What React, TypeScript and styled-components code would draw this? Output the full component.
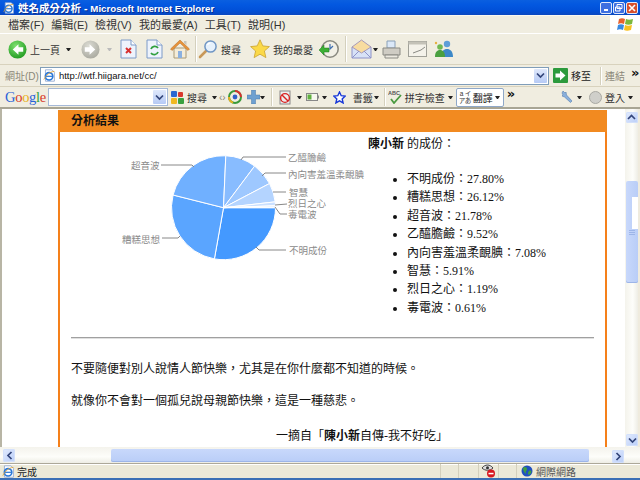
import React from "react";
import styled, { createGlobalStyle } from "styled-components";

const Global = createGlobalStyle`
  html, body { margin: 0; padding: 0; background: #ece9d8; overflow: hidden; }
  #root { width: 640px; height: 480px; }
  * { box-sizing: border-box; }
`;
const UI = `"Liberation Sans", "Noto Sans CJK TC", sans-serif`;
const SERIF = `"Liberation Serif", "Noto Sans CJK TC", serif`;

const Win = styled.div`
  width: 640px; height: 480px; display: flex; flex-direction: column; overflow: hidden;
  font-family: ${UI}; font-size: 11px; color: #222; background: #efebde;
`;
const TitleBar = styled.div`
  height: 15px; flex: none; display: flex; align-items: center; padding: 0 2px 0 3px;
  background: linear-gradient(180deg, #0a5fe0 0%, #0358e0 30%, #0150d8 70%, #0a48c0 100%);
`;
const TitleText = styled.span`
  margin-left: 3px; color: #fff; font-weight: 700; font-size: 10.5px; flex: 1; white-space: nowrap;
  text-shadow: 1px 1px 0 #0a2f90;
`;
const TitleLatin = styled.span`font-size: 9.7px;`;
const WinBtn = styled.div<{ $c?: string }>`
  width: 12px; height: 12px; margin-left: 1px; border: 1px solid #dfe8fb; border-radius: 2px;
  background: ${(p) => p.$c || "#3d6fe0"}; display: flex; align-items: center; justify-content: center;
`;
const MenuBar = styled.div`
  height: 19px; flex: none; display: flex; align-items: center; padding-left: 8px; gap: 7.2px;
  background: #f0ede0; border-bottom: 1px solid #fff; box-shadow: inset 0 1px 0 #faf8f0;
`;
const MenuItem = styled.span`font-size: 11px; color: #333; white-space: nowrap;`;
const FlagBox = styled.div`
  margin-left: auto; width: 30px; height: 18px; background: #fff; display: flex; align-items: center; justify-content: center;
`;
const Toolbar = styled.div`
  height: 31px; flex: none; display: flex; align-items: center; padding-left: 8px; background: #f0ede0;
  border-bottom: 1px solid #d8d2bd;
`;
const Tool = styled.div<{ $ml?: number }>`
  display: flex; align-items: center; gap: 3px; margin-left: ${(p) => p.$ml || 0}px; white-space: nowrap; font-size: 10px; color: #333; flex: none;
`;
const Caret = styled.span<{ $ml?: number; $c?: string }>`
  width: 5px; height: 3px; flex: none; margin-left: ${(p) => p.$ml || 0}px;
  border-left: 2.5px solid transparent; border-right: 2.5px solid transparent; border-top: 3px solid ${(p) => p.$c || "#222"};
`;
const Sep = styled.div<{ $ml?: number; $h?: number }>`
  width: 1px; height: ${(p) => p.$h || 26}px; background: #d4d0bd; box-shadow: 1px 0 0 #fff; flex: none; margin-left: ${(p) => p.$ml || 0}px;
`;
const AddressBar = styled.div`
  height: 22px; flex: none; display: flex; align-items: center; padding-left: 5px; background: #f0ede0; border-bottom: 1px solid #d8d2bd;
`;
const Dim = styled.span<{ $ml?: number }>`color: #8a8778; font-size: 10px; margin-left: ${(p) => p.$ml || 0}px; white-space: nowrap; flex: none;`;
const AddrInput = styled.div`
  margin-left: 1px; width: 509px; height: 18px; border: 1px solid #7f9db9; background: #fff; display: flex; align-items: center; padding-left: 2px; flex: none;
  font-size: 9.5px; color: #111; gap: 3px;
`;
const Combo = styled.div`
  margin-left: auto; width: 13px; height: 14px; margin-right: 1px; border-radius: 1px; background: linear-gradient(#dfe8fb, #b6caf5); display: flex; align-items: center; justify-content: center; flex: none;
`;
const GoText = styled.span`font-size: 10px; color: #222; margin-left: 3px;`;
const GoBtn = styled.div`display: flex; align-items: center; margin-left: 4px; flex: none;`;
const GBar = styled.div`
  height: 22px; flex: none; display: flex; align-items: center; padding-left: 5px; background: #f0ede0; border-bottom: 2px solid #a8a594;
`;
const Logo = styled.span`font-family: "Liberation Serif", serif; font-size: 14.5px; letter-spacing: -0.3px; width: 41px; flex: none;`;
const L = styled.span<{ $c: string }>`color: ${(p) => p.$c};`;
const GInput = styled.div`
  margin-left: 2px; width: 120px; height: 18px; border: 1px solid #a5b9d8; background: #fff; display: flex; align-items: center; flex: none;
`;
const TransBox = styled.div`
  margin-left: 3px; width: 48px; height: 19px; border: 1px solid #8fa8c8; border-radius: 2px; background: #fff; display: flex; align-items: center; flex: none; padding-left: 2px; gap: 2px; font-size: 10px; white-space: nowrap;
`;
const TransGlyphs = styled.div`
  display: grid; grid-template-columns: 6px 6px; grid-auto-rows: 7px; font-size: 6.5px; line-height: 7px; color: #333; text-align: center; flex: none;
`;
const Chevron = styled.span<{ $ml?: number }>`font-family: "DejaVu Sans", sans-serif; font-weight: 700; font-size: 13px; margin-left: ${(p) => p.$ml || 0}px; line-height: 10px; margin-top: -6px; flex: none; color: #111;`;

const Viewport = styled.div`
  flex: 1; min-height: 0; display: flex; background: #fff; border-left: 2px solid #b8b5a5; border-right: 2px solid #efebde;
`;
const Page = styled.div`flex: 1; min-width: 0; overflow: hidden; padding-left: 56px; font-family: ${SERIF}; color: #111; font-size: 12px;`;
const Card = styled.div`width: 549px; border-left: 2px solid #f5801a; border-right: 2px solid #f5801a; background: #fff; height: 400px;`;
const CardHead = styled.div`
  height: 22px; margin: 1px -2px 0; background: #f28a20; color: #111; font-weight: 700; font-size: 12px; display: flex; align-items: center; padding: 0 0 3px 13px; font-family: "Noto Sans CJK TC", sans-serif;
`;
const Result = styled.div`display: flex; height: 205px;`;
const ChartSvg = styled.svg`width: 308px; height: 205px; flex: none; font-family: "Noto Sans CJK TC", sans-serif; display: block;`;
const Info = styled.div`flex: 1; padding-top: 3px;`;
const Heading = styled.div`line-height: 18px; white-space: nowrap;`;
const Strong = styled.b`font-weight: 700;`;
const List = styled.ul`margin: 17px 0 0; padding: 0 0 0 39px; list-style: disc;`;
const Item = styled.li`line-height: 18.4px; white-space: nowrap;`;
const Rule = styled.hr`margin: 0 11px 0 11px; border: 0; height: 1px; background: #a0a0a0; box-shadow: 0 1px 0 #e0e0e0;`;
const Para = styled.p<{ $mt: number }>`margin: ${(p) => p.$mt}px 0 0 11px; line-height: 18px; white-space: nowrap;`;
const Cite = styled.p`margin: 17px 0 0 216px; line-height: 18px; white-space: nowrap;`;

const VBar = styled.div`
  width: 13px; flex: none; margin-left: 2px; display: flex; flex-direction: column; align-items: center; background: linear-gradient(90deg, #f4f3ec, #fdfdfa 60%, #eeede5); padding: 3px 0 1px;
`;
const ScrollBtn = styled.div<{ $w?: number; $h?: number; $end?: boolean }>`
  width: ${(p) => p.$w || 12}px; height: ${(p) => p.$h || 12}px; flex: none; border-radius: 2px; background: linear-gradient(135deg, #e2ebfe, #b9cdf8);
  display: flex; align-items: center; justify-content: center; box-shadow: inset 0 0 0 1px #d3e0fb;
  ${(p) => (p.$end ? "margin: auto 0 0 auto;" : "")}
`;
const VThumb = styled.div`
  width: 12px; height: 102px; margin-top: 58px; flex: none; border-radius: 2px; background: linear-gradient(90deg, #c8d8fb, #b9cdf7); position: relative; display: flex; flex-direction: column; align-items: center; justify-content: center; gap: 1px; box-shadow: inset 0 -1px 0 #9db5e8;
`;
const Highlight = styled.div`position: absolute; right: 0; top: 16px; width: 6px; height: 32px; background: #fff;`;
const Grip = styled.div`width: 6px; height: 1px; background: #9db5e8;`;
const HRow = styled.div`
  height: 16px; flex: none; display: flex; align-items: center; padding: 0 16px 0 3px; background: linear-gradient(180deg, #f4f3ec, #fdfdfa 60%, #eeede5);
`;
const HThumb = styled.div`
  margin-left: 96px; width: 478px; height: 13px; flex: none; border-radius: 2px; background: linear-gradient(#c8d8fb, #b9cdf7); box-shadow: inset 0 -1px 0 #9db5e8;
`;
const StatusBar = styled.div`
  height: 17px; flex: none; display: flex; align-items: center; padding-left: 2px; background: #ece9d8; border-top: 1px solid #aca899; box-shadow: inset 0 1px 0 #fff; border-bottom: 2px solid #3b6fb5; font-size: 10px; color: #222;
`;
const StatusCell = styled.div<{ $w?: number }>`
  width: ${(p) => p.$w}px; height: 14px; flex: none; border-left: 1px solid #d4d0bd; display: flex; align-items: center; justify-content: center;
`;
const StatusMain = styled.div`flex: 1; display: flex; align-items: center; gap: 2px;`;
const ZoneCell = styled(StatusCell)`justify-content: flex-start; padding-left: 4px; gap: 3px; color: #555;`;

const IE = ({ s = 14 }: { s?: number }) => (
  <svg width={s} height={s} viewBox="0 0 16 16">
    <path d="M3 1h8l3 3v11H3z" fill="#fff" stroke="#8aa4cf" />
    <circle cx="7.5" cy="9" r="4.6" fill="none" stroke="#2a78d8" strokeWidth="2" />
    <path d="M3 9h9" stroke="#2a78d8" strokeWidth="1.5" />
    <path d="M1 13C4 7 9 3 14 3" fill="none" stroke="#e0a030" strokeWidth="1" />
  </svg>
);
const Round = ({ c1, c2, s, dir }: { c1: string; c2: string; s: number; dir: "l" | "r" }) => (
  <svg width={s} height={s} viewBox="0 0 20 20">
    <defs>
      <radialGradient id={`g${c1.slice(1)}`} cx="40%" cy="30%" r="75%">
        <stop offset="0" stopColor={c1} />
        <stop offset="1" stopColor={c2} />
      </radialGradient>
    </defs>
    <circle cx="10" cy="10" r="9.5" fill={`url(#g${c1.slice(1)})`} />
    <path d={dir === "l" ? "M11 4.5 5 10l6 5.5V12.4h5V7.6h-5z" : "M9 4.5 15 10l-6 5.5V12.4H4V7.6h5z"} fill="#fff" />
  </svg>
);
const Doc = ({ children }: { children: React.ReactNode }) => (
  <svg width="17" height="20" viewBox="0 0 17 20">
    <path d="M1 1h10l5 5v13H1z" fill="#eef3fc" stroke="#7d9ac8" />
    <path d="M11 1v5h5" fill="#fff" stroke="#7d9ac8" />
    {children}
  </svg>
);
const Home = () => (
  <svg width="20" height="20" viewBox="0 0 20 20">
    <path d="M4 9h12v10H4z" fill="#f4ecd8" stroke="#a89a78" />
    <path d="M8 12h4v7H8z" fill="#8ab0e0" />
    <path d="M10 1 0.5 10l1.5 1.5L10 4l8 7.5 1.5-1.5z" fill="#e8923a" stroke="#b06a20" strokeWidth=".5" />
    <path d="M14 2h2.5v4L14 4z" fill="#c8c4b8" />
  </svg>
);
const Search = () => (
  <svg width="20" height="20" viewBox="0 0 20 20">
    <path d="M8 12 2 18" stroke="#c89858" strokeWidth="2.6" strokeLinecap="round" />
    <circle cx="12.5" cy="7.5" r="5.6" fill="#e6f1fc" stroke="#7096c4" strokeWidth="1.5" />
    <path d="M9.5 6a3.5 3.5 0 0 1 3-2.2" stroke="#fff" strokeWidth="1.3" fill="none" />
  </svg>
);
const Star = () => (
  <svg width="20" height="20" viewBox="0 0 20 20">
    <path d="M10 .8l2.8 6.1 6.6.7-5 4.4 1.5 6.600L10 15.200l-5.900 3.400 1.500-6.600-5-4.400 6.600-.7z" fill="#fbd948" stroke="#c9a230" strokeWidth=".8" />
  </svg>
);
const History = () => (
  <svg width="20" height="20" viewBox="0 0 20 20">
    <circle cx="11" cy="10" r="8.2" fill="#f2f0e6" stroke="#8a8a80" strokeWidth="1.6" />
    <path d="M11 5v5l3-3" stroke="#4070b0" strokeWidth="1.2" fill="none" />
    <path d="M0 11l5-5v3h5v4H5v3z" fill="#3cb034" stroke="#1f7a1f" strokeWidth=".5" />
  </svg>
);
const Mail = () => (
  <svg width="21" height="20" viewBox="0 0 21 20">
    <path d="M1 8h19v11H1z" fill="#d8e2f6" stroke="#8d92c8" />
    <path d="M1 8l9.5-7L20 8l-9.500 6z" fill="#f8dca0" stroke="#a89ab8" />
    <path d="M1 19l7-7m12 7-7-7" stroke="#8d92c8" />
  </svg>
);
const Printer = () => (
  <svg width="19" height="19" viewBox="0 0 19 19">
    <path d="M5 1h8v7H5z" fill="#dbe8f8" stroke="#8aa0b8" />
    <path d="M1 8h17v7H1z" fill="#cfccc4" stroke="#8a8a84" />
    <path d="M3 15h13v3H3z" fill="#ece9e0" stroke="#8a8a84" />
  </svg>
);
const Edit = () => (
  <svg width="19" height="16" viewBox="0 0 19 16">
    <rect x=".5" y=".5" width="18" height="15" fill="#f4f2ea" stroke="#a0a098" />
    <path d="M.5.5h18v3H.5z" fill="#c4c2b8" />
    <path d="M5 12l8-3 4-3" stroke="#8a8a84" fill="none" />
  </svg>
);
const Messenger = () => (
  <svg width="20" height="18" viewBox="0 0 20 18">
    <circle cx="13" cy="4" r="3.2" fill="#5f9ed8" />
    <path d="M7 17c0-6 3-8 6-8s6 2 6 8z" fill="#3c88c8" />
    <circle cx="6" cy="7" r="2.8" fill="#70b850" />
    <path d="M1 17c0-5 2-7 5-7s5 2 5 7z" fill="#4aa040" />
    <circle cx="2" cy="3" r="1.2" fill="#e8b040" />
  </svg>
);
const Flag = () => (
  <svg width="17" height="15" viewBox="0 0 17 15">
    <path d="M2 2c2-1 4-1 6 0L7 7C5 6 3 6 1 7z" fill="#e8612c" />
    <path d="M9 2c2 1 4 1 7 0l-1 5c-2 1-5 1-7 0z" fill="#7cb83a" />
    <path d="M1 8c2-1 4-1 6 0l-1 5c-2-1-4-1-6 0z" fill="#3a8ae0" />
    <path d="M8 8c2 1 4 1 7 0l-1 5c-3 1-5 1-7 0z" fill="#f8c020" />
  </svg>
);
const GSearch = () => (
  <svg width="13" height="13" viewBox="0 0 13 13">
    <rect x="0" y="0" width="6" height="6" rx="1" fill="#2a68d0" />
    <rect x="7" y="1" width="5" height="5" rx="1" fill="#d8382c" />
    <rect x="0" y="7" width="6" height="6" rx="1" fill="#f0b820" />
    <rect x="7" y="7" width="6" height="6" rx="1" fill="#3aa040" />
  </svg>
);
const Swirl = () => (
  <svg width="14" height="14" viewBox="0 0 14 14">
    <circle cx="7" cy="7" r="6" fill="none" stroke="#3a9a3a" strokeWidth="2" />
    <path d="M7 1a6 6 0 0 1 6 6" stroke="#d83030" strokeWidth="2" fill="none" />
    <path d="M1 7a6 6 0 0 0 4 5.6" stroke="#e8b020" strokeWidth="2" fill="none" />
    <circle cx="7" cy="7" r="2.4" fill="#3060c8" />
  </svg>
);
const Plus = () => (
  <svg width="13" height="14" viewBox="0 0 13 14">
    <path d="M4.5 0h4v5H13v4H8.500v5h-4V9H0V5h4.500z" fill="#6ea0d0" stroke="#4a78a8" strokeWidth=".5" />
  </svg>
);
const Block = () => (
  <svg width="15" height="15" viewBox="0 0 15 15">
    <rect x="1" y="1" width="10" height="13" fill="#eee" stroke="#888" />
    <circle cx="6" cy="8" r="4.4" fill="none" stroke="#d82020" strokeWidth="1.4" />
    <path d="M3 5l6 6" stroke="#d82020" strokeWidth="1.4" />
  </svg>
);
const Battery = () => (
  <svg width="13" height="8" viewBox="0 0 13 8">
    <rect x=".5" y=".5" width="11" height="7" fill="#f8f8f0" stroke="#888" />
    <rect x="1.500" y="1.500" width="4" height="5" fill="#60b040" />
    <rect x="11.500" y="2.500" width="1.500" height="3" fill="#888" />
  </svg>
);
const BlueStar = () => (
  <svg width="13" height="13" viewBox="0 0 13 13">
    <path d="M6.500 1l1.700 3.700 4 .4-3 2.800.9 4-3.600-2.100-3.600 2.100.9-4-3-2.800 4-.4z" fill="#fff" stroke="#1838d8" strokeWidth="1.400" />
  </svg>
);
const Abc = () => (
  <svg width="14" height="14" viewBox="0 0 14 14">
    <path d="M3 9l3 4 7-8" stroke="#4a9a40" strokeWidth="1.800" fill="none" />
    <text x="0" y="5" fontSize="5.500" fontWeight="700" fill="#555" fontFamily="Liberation Sans, sans-serif">ABC</text>
  </svg>
);
const Wrench = () => (
  <svg width="13" height="14" viewBox="0 0 13 14">
    <path d="M2 1l2 2 1-1 .5 3 5.500 6-1.500 1.500-6-5.500L1 6l1-1-1-2z" fill="#8ab0dc" stroke="#5580b0" strokeWidth=".6" />
  </svg>
);
const Dot = () => (
  <svg width="13" height="13" viewBox="0 0 13 13">
    <circle cx="6.500" cy="6.500" r="6" fill="#cfcfca" stroke="#a8a8a2" />
  </svg>
);
const Arrow = ({ d }: { d: string }) => (
  <svg width="9" height="7" viewBox="0 0 9 7">
    <path d={d} fill="none" stroke="#33457a" strokeWidth="1.700" />
  </svg>
);
const Eye = () => (
  <svg width="15" height="14" viewBox="0 0 15 14">
    <path d="M1 4c3-4 8-4 11 0-3 3-8 3-11 0z" fill="#ddd" stroke="#444" />
    <circle cx="6.500" cy="3.800" r="1.500" fill="#333" />
    <circle cx="10" cy="9.500" r="4" fill="#d81820" />
    <rect x="7.500" y="8.800" width="5" height="1.500" fill="#fff" />
  </svg>
);
const Globe = () => (
  <svg width="12" height="12" viewBox="0 0 12 12">
    <circle cx="6" cy="6" r="5.500" fill="#2050c0" />
    <path d="M2 3c2-2 4-1 4 1S4 6 5 8 2 7 2 3zM8 6c2-1 3 0 2 2s-3 2-3 1 0-2 1-3z" fill="#40a040" />
  </svg>
);
const Minimize = () => <svg width="7" height="7"><rect x="1" y="5" width="4" height="2" fill="#fff" /></svg>;
const Restore = () => <svg width="8" height="8"><path d="M2 .5h5v4H2zM.5 3h4.500v4H.5z" fill="none" stroke="#fff" /></svg>;
const Close = () => <svg width="8" height="8"><path d="M1 1l6 6M7 1 1 7" stroke="#fff" strokeWidth="1.600" /></svg>;

const slices = [
  { p: 27.8, c: "#4499ff" },
  { p: 26.12, c: "#5aa5ff" },
  { p: 21.78, c: "#70b0ff" },
  { p: 9.52, c: "#88bcff" },
  { p: 7.08, c: "#9ec8ff" },
  { p: 5.91, c: "#b4d4ff" },
  { p: 1.19, c: "#cae0ff" },
  { p: 0.61, c: "#e0eeff" },
];
const CX = 223.5, CY = 207.7, R = 52;
function piePaths() {
  let a = 0;
  return slices.map((s) => {
    const a1 = (a * Math.PI) / 180;
    a += (s.p * 360) / 100;
    const a2 = (a * Math.PI) / 180;
    return {
      c: s.c,
      d: `M${CX} ${CY}L${CX + R * Math.cos(a1)} ${CY + R * Math.sin(a1)}A${R} ${R} 0 0 1 ${CX + R * Math.cos(a2)} ${CY + R * Math.sin(a2)}Z`,
    };
  });
}
const labels = [
  { t: "超音波", x: 131, y: 169, l: "M161 165H192L194 167" },
  { t: "乙醯膽鹼", x: 288, y: 161, l: "M241 160L243 157H286" },
  { t: "內向害羞溫柔靦腆", x: 288, y: 178, l: "M262 176L265 173H286" },
  { t: "智慧", x: 289, y: 196, l: "M273 192H286" },
  { t: "烈日之心", x: 288, y: 207, l: "M275 205L287 204" },
  { t: "毒電波", x: 288, y: 218, l: "M275 207L280 214H287" },
  { t: "糟糕思想", x: 122, y: 243, l: "M162 238H178L180 236" },
  { t: "不明成份", x: 289, y: 254, l: "M256 247L259 250H286" },
];
const items = [
  ["不明成份", "27.80%"],
  ["糟糕思想", "26.12%"],
  ["超音波", "21.78%"],
  ["乙醯膽鹼", "9.52%"],
  ["內向害羞溫柔靦腆", "7.08%"],
  ["智慧", "5.91%"],
  ["烈日之心", "1.19%"],
  ["毒電波", "0.61%"],
];

export default function App() {
  return (
    <Win>
      <Global />
      <TitleBar>
        <IE s={12} />
        <TitleText>姓名成分分析 - <TitleLatin>Microsoft Internet Explorer</TitleLatin></TitleText>
        <WinBtn><Minimize /></WinBtn>
        <WinBtn><Restore /></WinBtn>
        <WinBtn $c="#d8502c"><Close /></WinBtn>
      </TitleBar>
      <MenuBar>
        {["檔案(F)", "編輯(E)", "檢視(V)", "我的最愛(A)", "工具(T)", "說明(H)"].map((m) => (
          <MenuItem key={m}>{m}</MenuItem>
        ))}
        <FlagBox><Flag /></FlagBox>
      </MenuBar>
      <Toolbar>
        <Tool><Round c1="#7ee070" c2="#209a20" s={19} dir="l" /><span>上一頁</span></Tool>
        <Caret $ml={6} />
        <Tool $ml={10}><Round c1="#dcdcd4" c2="#a8a89e" s={19} dir="r" /></Tool>
        <Caret $ml={7} $c="#bbb" />
        <Tool $ml={8}><Doc><path d="M6 9l5 5m0-5-5 5" stroke="#d83030" strokeWidth="2" /></Doc></Tool>
        <Tool $ml={9}><Doc><path d="M5 10a4 4 0 0 1 7-1M12 13a4 4 0 0 1-7 1" stroke="#30a040" strokeWidth="1.800" fill="none" /></Doc></Tool>
        <Tool $ml={7}><Home /></Tool>
        <Sep $ml={5} />
        <Tool $ml={2}><Search /><span>搜尋</span></Tool>
        <Tool $ml={9}><Star /><span>我的最愛</span></Tool>
        <Tool $ml={6}><History /></Tool>
        <Sep $ml={6} />
        <Tool $ml={5}><Mail /></Tool>
        <Caret $ml={1} />
        <Tool $ml={4}><Printer /></Tool>
        <Tool $ml={7}><Edit /></Tool>
        <Tool $ml={7}><Messenger /></Tool>
      </Toolbar>
      <AddressBar>
        <Dim>網址(D)</Dim>
        <AddrInput>
          <IE s={13} />
          <span>http://wtf.hiigara.net/cc/</span>
          <Combo><Arrow d="M1 1.500l3.500 3.500L8 1.500" /></Combo>
        </AddrInput>
        <GoBtn>
          <svg width="15" height="15" viewBox="0 0 15 15">
            <rect width="15" height="15" rx="1" fill="#2c9a3c" />
            <path d="M7 2.500 12.500 7.500 7 12.500V9.500H2.500v-4H7z" fill="#fff" />
          </svg>
          <GoText>移至</GoText>
        </GoBtn>
        <Sep $ml={9} $h={18} />
        <Dim $ml={4}>連結</Dim>
        <Chevron $ml={6}>»</Chevron>
      </AddressBar>
      <GBar>
        <Logo><L $c="#2a62d8">G</L><L $c="#d83828">o</L><L $c="#e8b020">o</L><L $c="#2a62d8">g</L><L $c="#30a040">l</L><L $c="#d83828">e</L></Logo>
        <GInput><Combo><Arrow d="M1 1.500l3.500 3.500L8 1.500" /></Combo></GInput>
        <Tool $ml={3}><GSearch /><span>搜尋</span></Tool>
        <Caret $ml={5} />
        <Tool $ml={2}><Dim>‹›</Dim></Tool>
        <Tool $ml={2}><Swirl /></Tool>
        <Tool $ml={5}><Plus /></Tool>
        <Caret />
        <Sep $ml={6} $h={18} />
        <Tool $ml={7}><Block /></Tool>
        <Caret $ml={3} />
        <Tool $ml={4}><Battery /></Tool>
        <Caret $ml={3} />
        <Tool $ml={6}><BlueStar /></Tool>
        <Tool $ml={7}><span>書籤</span></Tool>
        <Caret $ml={1} />
        <Sep $ml={5} $h={18} />
        <Tool $ml={3}><Abc /><span>拼字檢查</span></Tool>
        <Caret $ml={3} />
        <TransBox>
          <TransGlyphs><span>a</span><span>イ</span><span>ア</span><span>あ</span></TransGlyphs>
          <span>翻譯</span>
          <Caret />
        </TransBox>
        <Chevron $ml={3}>»</Chevron>
        <Tool $ml={46}><Wrench /></Tool>
        <Caret $ml={3} />
        <Tool $ml={7}><Dot /><span>登入</span></Tool>
        <Caret $ml={3} />
      </GBar>
      <Viewport>
        <Page>
          <Card>
            <CardHead>分析結果</CardHead>
            <Result>
              <ChartSvg viewBox="60 132 308 205">
                {piePaths().map((s) => (
                  <path key={s.c} d={s.d} fill={s.c} stroke="#fff" strokeWidth="1" />
                ))}
                {labels.map((l) => (
                  <g key={l.t}>
                    <path d={l.l} fill="none" stroke="#888" strokeWidth="1" />
                    <text x={l.x} y={l.y} fontSize="9.500" fill="#8a8a8a">{l.t}</text>
                  </g>
                ))}
              </ChartSvg>
              <Info>
                <Heading><Strong>陳小新</Strong> 的成份：</Heading>
                <List>
                  {items.map(([n, v]) => (
                    <Item key={n}>{n}：{v}</Item>
                  ))}
                </List>
              </Info>
            </Result>
            <Rule />
            <Para $mt={22}>不要隨便對別人說情人節快樂，尤其是在你什麼都不知道的時候。</Para>
            <Para $mt={14}>就像你不會對一個孤兒說母親節快樂，這是一種慈悲。</Para>
            <Cite>一摘自「<Strong>陳小新</Strong>自傳-我不好吃」</Cite>
          </Card>
        </Page>
        <VBar>
          <ScrollBtn $h={11}><Arrow d="M1 5l3.500-3.500L8 5" /></ScrollBtn>
          <VThumb>
            <Highlight />
            <Grip /><Grip /><Grip />
          </VThumb>
          <ScrollBtn $end><Arrow d="M1 1.500l3.500 3.500L8 1.500" /></ScrollBtn>
        </VBar>
      </Viewport>
      <HRow>
        <ScrollBtn $h={13}><svg width="7" height="9" viewBox="0 0 7 9"><path d="M5.500 1 2 4.500 5.500 8" fill="none" stroke="#33457a" strokeWidth="1.700" /></svg></ScrollBtn>
        <HThumb />
        <ScrollBtn $h={13} $end><svg width="7" height="9" viewBox="0 0 7 9"><path d="M1.500 1 5 4.500 1.500 8" fill="none" stroke="#33457a" strokeWidth="1.700" /></svg></ScrollBtn>
      </HRow>
      <StatusBar>
        <StatusMain><IE s={13} /><span>完成</span></StatusMain>
        <StatusCell $w={18} />
        <StatusCell $w={20} />
        <StatusCell $w={20}><Eye /></StatusCell>
        <StatusCell $w={18} />
        <ZoneCell $w={124}><Globe /><span>網際網路</span></ZoneCell>
      </StatusBar>
    </Win>
  );
}
